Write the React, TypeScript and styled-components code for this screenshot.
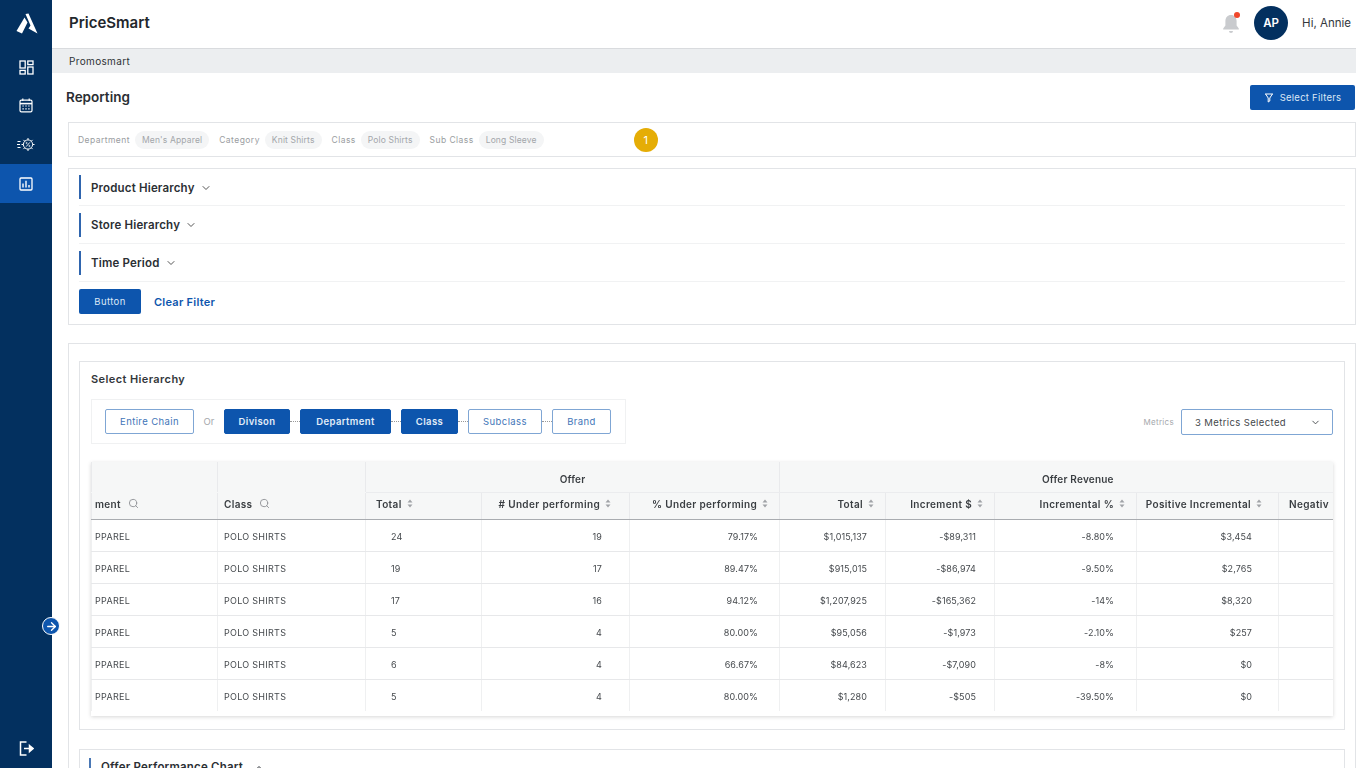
import React from "react";
import styled, { createGlobalStyle } from "styled-components";
import { ChevronDown, ChevronUp, Search, ArrowRight } from "lucide-react";

const blue = "#0d55ad";
const navy = "#03305f";
const font = `Inter, "Open Sans", "Liberation Sans", sans-serif`;

const Global = createGlobalStyle`
  html, body { margin: 0; padding: 0; height: 768px; overflow: hidden; background: #fff; }
  body { font-family: ${font}; color: #1f2329; }
  * { box-sizing: border-box; }
`;

const Shell = styled.div`
  display: flex;
  width: 1356px;
  height: 768px;
  overflow: hidden;
`;

const Sidebar = styled.aside`
  position: relative;
  width: 52px;
  flex: none;
  background: ${navy};
  display: flex;
  flex-direction: column;
  align-items: center;
`;

const LogoWrap = styled.div`
  height: 48px;
  width: 100%;
  display: grid;
  place-items: center;
  padding-left: 2px;
`;

const NavItem = styled.div<{ $active?: boolean; $h?: number }>`
  width: 100%;
  height: ${(p) => p.$h || 38}px;
  display: grid;
  place-items: center;
  background: ${(p) => (p.$active ? blue : "transparent")};
`;

const NavSpacer = styled.div`
  flex: 1;
`;

const Logout = styled.div`
  height: 40px;
  width: 100%;
  display: grid;
  place-items: center;
`;

const Expand = styled.div`
  position: absolute;
  left: 42px;
  top: 617px;
  width: 18px;
  height: 18px;
  border-radius: 50%;
  background: ${blue};
  border: 1.5px solid #fff;
  display: grid;
  place-items: center;
  color: #fff;
`;

const Main = styled.main`
  flex: 1;
  min-width: 0;
  display: flex;
  flex-direction: column;
`;

const Header = styled.header`
  height: 49px;
  flex: none;
  display: flex;
  align-items: center;
  justify-content: space-between;
  padding: 0 5px 4px 17px;
  border-bottom: 1px solid #d9dbde;
`;

const Brand = styled.div`
  font-size: 15px;
  font-weight: 600;
  color: #23272c;
`;

const UserArea = styled.div`
  display: flex;
  align-items: center;
  padding-top: 2px;
`;

const BellWrap = styled.div`
  position: relative;
  width: 20px;
  height: 22px;
  margin-right: 13px;
  color: #c9cbce;
`;

const BellDot = styled.span`
  position: absolute;
  top: 0;
  right: 1px;
  width: 6px;
  height: 6px;
  border-radius: 50%;
  background: #f0472b;
`;

const Avatar = styled.div`
  width: 34px;
  height: 34px;
  border-radius: 50%;
  background: ${navy};
  color: #fff;
  font-size: 11.5px;
  font-weight: 600;
  display: grid;
  place-items: center;
  margin-right: 14px;
`;

const Greeting = styled.div`
  font-size: 11.5px;
  color: #33373c;
`;

const Crumb = styled.div`
  height: 24px;
  flex: none;
  background: #eceef0;
  padding-left: 17px;
  font-size: 10px;
  letter-spacing: 0.35px;
  line-height: 24px;
  color: #2e3236;
`;

const Content = styled.div`
  flex: 1;
  padding-left: 16px;
  min-height: 0;
`;

const TitleRow = styled.div`
  height: 49px;
  display: flex;
  align-items: center;
  justify-content: space-between;
  margin-left: -2px;
`;

const Title = styled.h1`
  margin: -2px 0 0;
  font-size: 13.5px;
  font-weight: 600;
  color: #2a2e33;
`;

const PrimaryButton = styled.button`
  height: 25px;
  padding: 0;
  border: none;
  border-radius: 2px;
  background: ${blue};
  color: #dce8f6;
  font-family: ${font};
  font-size: 9.5px;
  letter-spacing: 0.25px;
  display: inline-flex;
  align-items: center;
  justify-content: center;
  gap: 6px;
`;

const FilterButton = styled(PrimaryButton)`
  width: 105px;
  margin-right: 1px;
`;

const Panel = styled.section`
  border: 1px solid #e2e4e7;
  background: #fff;
`;

const ChipBar = styled(Panel)`
  height: 35px;
  display: flex;
  align-items: center;
  padding-left: 9px;
  margin-bottom: 11px;
`;

const ChipLabel = styled.span`
  font-size: 8.5px;
  letter-spacing: 0.45px;
  color: #9a9da1;
  margin-right: 5px;
`;

const Chip = styled.span`
  height: 18px;
  line-height: 18px;
  padding: 0 7px;
  border-radius: 9px;
  background: #f4f5f6;
  color: #a3a6aa;
  font-size: 8.5px;
  letter-spacing: 0.15px;
  margin-right: 10px;
`;

const Badge = styled.span`
  width: 24px;
  height: 24px;
  margin-left: 80px;
  border-radius: 50%;
  background: #e5ad06;
  color: #fff;
  font-size: 11px;
  display: grid;
  place-items: center;
`;

const FilterPanel = styled(Panel)`
  height: 157px;
  padding: 0 10px;
  margin-bottom: 18px;
`;

const Accordion = styled.div`
  height: 38px;
  display: flex;
  align-items: center;
  border-bottom: 1px solid #f1f2f3;
  &:first-child {
    height: 37px;
  }
`;

const AccordionTitle = styled.div`
  height: 24px;
  border-left: 2px solid #2f65ae;
  padding: 1px 0 0 10px;
  display: flex;
  align-items: center;
  gap: 5px;
  font-size: 11.5px;
  letter-spacing: 0.17px;
  font-weight: 600;
  color: #2b2f34;
  svg {
    color: #555;
  }
`;

const ActionRow = styled.div`
  display: flex;
  align-items: center;
  gap: 13px;
  padding-top: 7px;
`;

const ApplyButton = styled(PrimaryButton)`
  width: 62px;
  letter-spacing: 0.4px;
`;

const ClearLink = styled.span`
  font-size: 11px;
  letter-spacing: 0.25px;
  font-weight: 600;
  color: ${blue};
`;

const Outer = styled(Panel)`
  height: 500px;
  padding: 17px 10px 0;
`;

const Inner = styled(Panel)`
  height: 369px;
  padding: 10px 11px 0;
  margin-bottom: 19px;
`;

const InnerTitle = styled.h2`
  margin: 0 0 13px;
  font-size: 11px;
  letter-spacing: 0.4px;
  font-weight: 600;
  line-height: 14px;
  color: #33373b;
`;

const HierarchyRow = styled.div`
  display: flex;
  align-items: center;
  justify-content: space-between;
  margin-bottom: 18px;
`;

const Steps = styled.div`
  width: 535px;
  height: 45px;
  border: 1px solid #f0f1f2;
  display: flex;
  align-items: center;
  padding-left: 13px;
`;

const Step = styled.div<{ $on?: boolean; $w: number }>`
  width: ${(p) => p.$w}px;
  height: 25px;
  border-radius: 2px;
  border: 1px solid ${(p) => (p.$on ? blue : "#7fa6d4")};
  background: ${(p) => (p.$on ? blue : "#fff")};
  color: ${(p) => (p.$on ? "#e3edf8" : "#3f76b8")};
  font-size: 9.5px;
  letter-spacing: 0.4px;
  font-weight: ${(p) => (p.$on ? 600 : 400)};
  display: grid;
  place-items: center;
`;

const Or = styled.span`
  width: 30px;
  text-align: center;
  font-size: 9.5px;
  color: #a5a8ac;
`;

const Link = styled.span`
  width: 10px;
  border-top: 1px dotted #999;
`;

const MetricsGroup = styled.div`
  display: flex;
  align-items: center;
  gap: 7px;
  margin-top: 1px;
`;

const MetricsLabel = styled.span`
  font-size: 8px;
  letter-spacing: 0.3px;
  color: #a5a8ac;
`;

const MetricsSelect = styled.div`
  width: 152px;
  height: 26px;
  border: 1px solid #7fa6d4;
  border-radius: 2px;
  display: flex;
  align-items: center;
  justify-content: space-between;
  padding: 0 11px 0 13px;
  font-size: 9.5px;
  letter-spacing: 0.38px;
  color: #44484c;
`;

const TableWrap = styled.div`
  width: 1242px;
  height: 254px;
  overflow: hidden;
  will-change: transform;
  box-shadow: 0 1px 4px rgba(0, 0, 0, 0.16);
`;

const Table = styled.table`
  width: 1242px;
  table-layout: fixed;
  border-collapse: collapse;
`;

const GroupCell = styled.th<{ $plain?: boolean; $shift?: number }>`
  height: 30px;
  padding: 5px 0 0 ${(p) => p.$shift || 0}px;
  background: #f6f7f7;
  font-size: 10px;
  letter-spacing: 0.2px;
  font-weight: 600;
  color: #3a3e42;
  text-align: center;
  border-left: 1px solid #e9eaec;
  border-bottom: 1px solid ${(p) => (p.$plain ? "#f6f7f7" : "#ebecee")};
`;

const HeadCell = styled.th<{ $align?: string; $pl?: number; $pr?: number }>`
  height: 27px;
  padding: 0 ${(p) => p.$pr ?? 8}px 4px ${(p) => p.$pl ?? 8}px;
  background: #f6f7f7;
  font-size: 10px;
  letter-spacing: 0.35px;
  font-weight: 600;
  color: #3a3e42;
  text-align: ${(p) => p.$align || "right"};
  white-space: nowrap;
  overflow: hidden;
  border-left: 1px solid #e9eaec;
  border-bottom: 1.5px solid #a9acb0;
`;

const HeadInner = styled.span`
  display: inline-flex;
  align-items: center;
  gap: 5px;
`;

const SearchHead = styled.span`
  display: inline-flex;
  align-items: center;
  gap: 7px;
  svg {
    color: #8f9296;
  }
`;

const BodyRow = styled.tr`
  td {
    border-bottom: 1px solid #e7e8ea;
  }
  &:last-child td {
    border-bottom: none;
  }
`;

const Cell = styled.td<{ $align?: string; $pad?: string }>`
  height: 32px;
  padding: ${(p) => p.$pad || "0 8px"};
  padding-top: 2px;
  font-size: 9px;
  letter-spacing: 0.1px;
  color: #45494d;
  text-align: ${(p) => p.$align || "right"};
  white-space: nowrap;
  border-left: 1px solid #eff0f1;
`;

const NameCell = styled(Cell)`
  letter-spacing: 0.28px;
  text-align: left;
`;

const Fold = styled(Panel)`
  height: 40px;
  padding: 8px 0 0 9px;
`;

const FoldTitle = styled.div`
  height: 24px;
  border-left: 2px solid #4a78b5;
  padding: 1px 0 0 10px;
  display: flex;
  align-items: flex-start;
  gap: 10px;
  font-size: 11.5px;
  letter-spacing: 0.2px;
  line-height: 16px;
  font-weight: 600;
  color: #2b2f34;
  svg {
    margin-top: 3px;
  }
`;

const Logo = () => (
  <svg width="22" height="22" viewBox="0 0 22 22" fill="#fff">
    <path d="M8.5 4.5 L11.5 9.5 L6 20.5 L0.5 18 Z" />
    <path d="M9.5 1 L12.5 0.5 L21.5 20.5 L12.5 15.5 L14.5 12.5 Z" />
  </svg>
);

const Dash = () => (
  <svg width="15" height="15" viewBox="0 0 15 15" fill="none" stroke="#fff" strokeWidth="1.3">
    <rect x="1" y="1" width="5.2" height="7" />
    <rect x="8.8" y="1" width="5.2" height="3.6" />
    <rect x="1" y="10.4" width="5.2" height="3.6" />
    <rect x="8.8" y="7" width="5.2" height="7" />
  </svg>
);

const Calendar = () => (
  <svg width="14" height="15" viewBox="0 0 14 15" fill="none" stroke="#fff" strokeWidth="1.2">
    <rect x="1" y="2.2" width="12" height="11.6" rx="1.4" />
    <path d="M1 5.6h12" strokeWidth="1.6" />
    <path d="M3.8 0.6v2.4M10.2 0.6v2.4" />
    <path d="M3.4 8h1.4M6.3 8h1.4M9.2 8h1.4M3.4 10.8h1.4M6.3 10.8h1.4M9.2 10.8h1.4" />
  </svg>
);

const Promo = () => (
  <svg width="18" height="15" viewBox="0 0 18 15" fill="none" stroke="#fff" strokeWidth="1">
    <circle cx="11" cy="7.5" r="4.6" />
    <path d="M11 1v1.9M11 12.1V14M4.5 7.5h1.9M15.6 7.5h1.9M6.4 2.9l1.3 1.3M14.3 10.8l1.3 1.3M6.4 12.1l1.3-1.3M14.3 4.2l1.3-1.3" />
    <path d="M9.2 9.6l3.6-4.2" strokeWidth=".9" />
    <circle cx="9.6" cy="6" r=".6" strokeWidth=".7" />
    <circle cx="12.4" cy="9" r=".6" strokeWidth=".7" />
    <path d="M0.5 4.5h3M0 7.5h3M0.5 10.5h3" />
  </svg>
);

const Report = () => (
  <svg width="14" height="14" viewBox="0 0 14 14" fill="none" stroke="#fff" strokeWidth="1.3">
    <rect x="1" y="1" width="12" height="12" rx="1" />
    <path d="M4 10.5V6.5M7 10.5V3.8M10 10.5V8" strokeWidth="1.4" />
  </svg>
);

const Exit = () => (
  <svg width="15" height="15" viewBox="0 0 15 15" fill="none" stroke="#fff" strokeWidth="1.5">
    <path d="M7.5 1H1.5V14H7.5" />
    <path d="M5 7.5H12" />
    <path d="M10.5 4.5L14 7.5L10.5 10.5Z" fill="#fff" />
  </svg>
);

const Bell = () => (
  <svg width="20" height="22" viewBox="0 0 20 22" fill="currentColor">
    <path d="M10 3c-3.4 0-5.6 2.6-5.6 6v4.4L2.2 16.6v.9h15.6v-.9l-2.2-3.2V9c0-3.4-2.2-6-5.6-6z" />
    <path d="M8 19h4a2 2 0 0 1-4 0z" />
  </svg>
);

const Funnel = () => (
  <svg width="10" height="10" viewBox="0 0 10 10" fill="none" stroke="#fff" strokeWidth="1">
    <path d="M1 1h8M1.6 1l2.6 4v4l1.6-1V5l2.6-4" />
  </svg>
);

const Sort = () => (
  <svg width="6" height="9" viewBox="0 0 6 9" fill="#a0a3a7">
    <path d="M3 0.5L5.5 3.5H0.5Z" />
    <path d="M3 8.5L5.5 5.5H0.5Z" />
  </svg>
);

const sections = ["Product Hierarchy", "Store Hierarchy", "Time Period"];

const chips = [
  ["Department", "Men's Apparel"],
  ["Category", "Knit Shirts"],
  ["Class", "Polo Shirts"],
  ["Sub Class", "Long Sleeve"],
];

const widths = [126, 148, 116, 148, 150, 106, 109, 142, 142, 55];

const rows = [
  ["24", "19", "79.17%", "$1,015,137", "-$89,311", "-8.80%", "$3,454"],
  ["19", "17", "89.47%", "$915,015", "-$86,974", "-9.50%", "$2,765"],
  ["17", "16", "94.12%", "$1,207,925", "-$165,362", "-14%", "$8,320"],
  ["5", "4", "80.00%", "$95,056", "-$1,973", "-2.10%", "$257"],
  ["6", "4", "66.67%", "$84,623", "-$7,090", "-8%", "$0"],
  ["5", "4", "80.00%", "$1,280", "-$505", "-39.50%", "$0"],
];

const sortHeads = [
  { label: "# Under performing", pr: 18 },
  { label: "% Under performing", pr: 11 },
  { label: "Total", pr: 11 },
  { label: "Increment $", pr: 11 },
  { label: "Incremental %", pr: 11 },
  { label: "Positive Incremental", pr: 16 },
];

export default function App() {
  return (
    <Shell>
      <Global />
      <Sidebar>
        <LogoWrap>
          <Logo />
        </LogoWrap>
        <NavItem>
          <Dash />
        </NavItem>
        <NavItem>
          <Calendar />
        </NavItem>
        <NavItem $h={40}>
          <Promo />
        </NavItem>
        <NavItem $active $h={39}>
          <Report />
        </NavItem>
        <NavSpacer />
        <Logout>
          <Exit />
        </Logout>
        <Expand>
          <ArrowRight size={13} strokeWidth={2.5} />
        </Expand>
      </Sidebar>
      <Main>
        <Header>
          <Brand>PriceSmart</Brand>
          <UserArea>
            <BellWrap>
              <Bell />
              <BellDot />
            </BellWrap>
            <Avatar>AP</Avatar>
            <Greeting>Hi, Annie</Greeting>
          </UserArea>
        </Header>
        <Crumb>Promosmart</Crumb>
        <Content>
          <TitleRow>
            <Title>Reporting</Title>
            <FilterButton>
              <Funnel />
              Select Filters
            </FilterButton>
          </TitleRow>
          <ChipBar>
            {chips.map(([label, value]) => (
              <React.Fragment key={label}>
                <ChipLabel>{label}</ChipLabel>
                <Chip>{value}</Chip>
              </React.Fragment>
            ))}
            <Badge>1</Badge>
          </ChipBar>
          <FilterPanel>
            {sections.map((s) => (
              <Accordion key={s}>
                <AccordionTitle>
                  {s}
                  <ChevronDown size={12} />
                </AccordionTitle>
              </Accordion>
            ))}
            <ActionRow>
              <ApplyButton>Button</ApplyButton>
              <ClearLink>Clear Filter</ClearLink>
            </ActionRow>
          </FilterPanel>
          <Outer>
            <Inner>
              <InnerTitle>Select Hierarchy</InnerTitle>
              <HierarchyRow>
                <Steps>
                  <Step $w={89}>Entire Chain</Step>
                  <Or>Or</Or>
                  <Step $on $w={66}>Divison</Step>
                  <Link />
                  <Step $on $w={91}>Department</Step>
                  <Link />
                  <Step $on $w={57}>Class</Step>
                  <Link />
                  <Step $w={74}>Subclass</Step>
                  <Link />
                  <Step $w={59}>Brand</Step>
                </Steps>
                <MetricsGroup>
                  <MetricsLabel>Metrics</MetricsLabel>
                  <MetricsSelect>
                    3 Metrics Selected
                    <ChevronDown size={11} />
                  </MetricsSelect>
                </MetricsGroup>
              </HierarchyRow>
              <TableWrap>
                <Table>
                  <colgroup>
                    {widths.map((w, i) => (
                      <col key={i} style={{ width: w }} />
                    ))}
                  </colgroup>
                  <thead>
                    <tr>
                      <GroupCell $plain />
                      <GroupCell $plain />
                      <GroupCell colSpan={3}>Offer</GroupCell>
                      <GroupCell colSpan={5} $shift={42}>Offer Revenue</GroupCell>
                    </tr>
                    <tr>
                      <HeadCell $align="left" $pl={3}>
                        <SearchHead>
                          ment
                          <Search size={11} />
                        </SearchHead>
                      </HeadCell>
                      <HeadCell $align="left" $pl={6}>
                        <SearchHead>
                          Class
                          <Search size={11} />
                        </SearchHead>
                      </HeadCell>
                      <HeadCell $align="left" $pl={10}>
                        <HeadInner>
                          Total <Sort />
                        </HeadInner>
                      </HeadCell>
                      {sortHeads.map((h) => (
                        <HeadCell key={h.label} $pr={h.pr} $pl={0}>
                          <HeadInner>
                            {h.label} <Sort />
                          </HeadInner>
                        </HeadCell>
                      ))}
                      <HeadCell $align="left" $pl={10} $pr={0}>Negativ</HeadCell>
                    </tr>
                  </thead>
                  <tbody>
                    {rows.map((r, i) => (
                      <BodyRow key={i}>
                        <NameCell $pad="0 0 0 3px">PPAREL</NameCell>
                        <NameCell $pad="0 0 0 6px">POLO SHIRTS</NameCell>
                        <Cell $align="left" $pad="0 0 0 25px">{r[0]}</Cell>
                        <Cell $pad="0 27px 0 0">{r[1]}</Cell>
                        <Cell $pad="0 21px 0 0">{r[2]}</Cell>
                        <Cell $pad="0 18px 0 0">{r[3]}</Cell>
                        <Cell $pad="0 18px 0 0">{r[4]}</Cell>
                        <Cell $pad="0 22px 0 0">{r[5]}</Cell>
                        <Cell $pad="0 26px 0 0">{r[6]}</Cell>
                        <Cell />
                      </BodyRow>
                    ))}
                  </tbody>
                </Table>
              </TableWrap>
            </Inner>
            <Fold>
              <FoldTitle>
                Offer Performance Chart
                <ChevronUp size={12} />
              </FoldTitle>
            </Fold>
          </Outer>
        </Content>
      </Main>
    </Shell>
  );
}
